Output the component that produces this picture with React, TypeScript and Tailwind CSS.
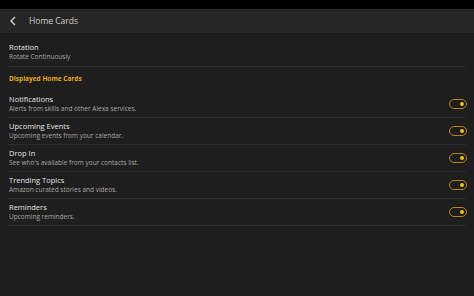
import React from 'react';

const cards = [
    { title: 'Notifications', sub: 'Alerts from skills and other Alexa services.' },
    { title: 'Upcoming Events', sub: 'Upcoming events from your calendar.' },
    { title: 'Drop In', sub: "See who's available from your contacts list." },
    { title: 'Trending Topics', sub: 'Amazon curated stories and videos.' },
    { title: 'Reminders', sub: 'Upcoming reminders.' },
];

const Toggle = () => (
    <div className="w-[18px] h-[10px] rounded-full border-[1.5px] border-[#b8851d] flex items-center justify-end pr-[2px]">
        <div className="w-[4px] h-[4px] rounded-full bg-[#f2c21b]" />
    </div>
);

export default function App() {
    return (
        <div className="w-[474px] h-[296px] bg-[#1e1e1e] flex flex-col overflow-hidden" style={{ fontFamily: '"Open Sans", "Noto Sans", sans-serif' }}>
            <div className="h-[9px] bg-black" />
            <div className="h-[25px] bg-[#262626] border-b border-[#1a1a1a] flex items-center">
                <svg width="8" height="10" viewBox="0 0 8 10" className="ml-[9px]">
                    <path d="M6 1 L2 5 L6 9" stroke="#d0d0d0" strokeWidth="1.4" fill="none" />
                </svg>
                <span className="ml-[12px] text-[8.5px] text-[#cfcfcf]">Home Cards</span>
            </div>

            <div className="px-[9px] pt-[8px] pb-[4px] flex flex-col leading-[10px]">
                <span className="text-[7.5px] text-[#e4e4e4]">Rotation</span>
                <span className="text-[6.5px] text-[#a8a8a8]">Rotate Continuously</span>
            </div>
            <div className="mx-[8px] h-px bg-[#2c2c2c]" />

            <div className="px-[9px] h-[24px] pb-[1px] flex items-center">
                <span className="text-[6.5px] font-bold text-[#e8a623]">Displayed Home Cards</span>
            </div>

            {cards.map((c, i) => (
                <div key={i} className="flex flex-col">
                    <div className="h-[26px] px-[9px] flex items-center justify-between">
                        <div className="flex flex-col leading-[10px] pb-[1px]">
                            <span className="text-[7.5px] text-[#e4e4e4]">{c.title}</span>
                            <span className="text-[6.5px] text-[#a8a8a8]">{c.sub}</span>
                        </div>
                        <div className="mr-[-2px]">
                            <Toggle />
                        </div>
                    </div>
                    <div className="mx-[8px] h-px bg-[#2c2c2c]" />
                </div>
            ))}
        </div>
    );
}
